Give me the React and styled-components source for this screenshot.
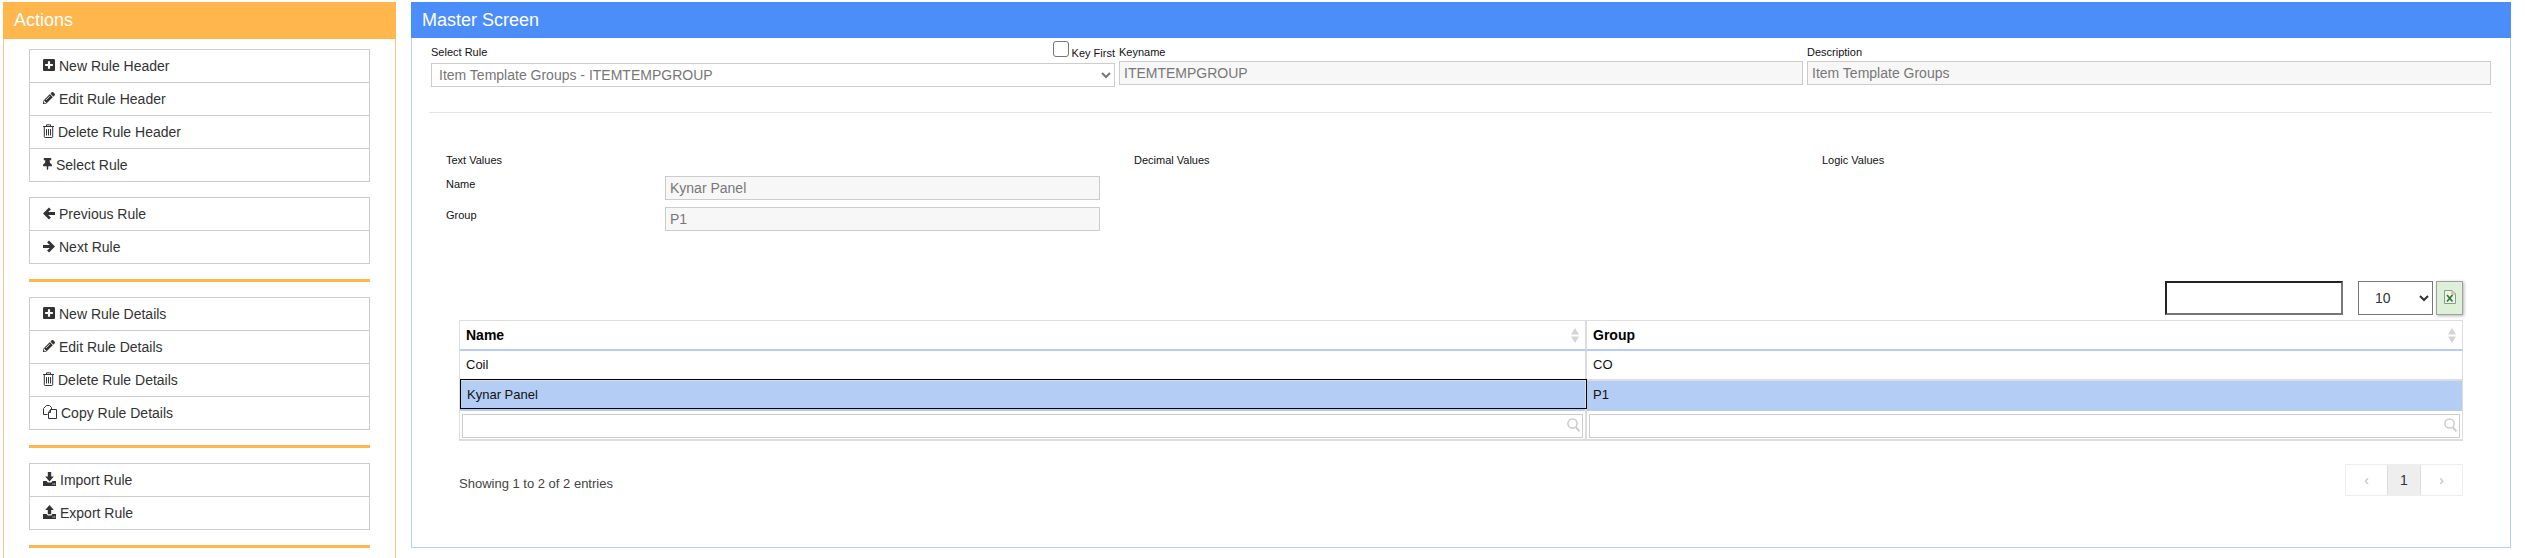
import React from "react";
import styled, { createGlobalStyle } from "styled-components";
import { FaPlusSquare, FaPencilAlt, FaThumbtack } from "react-icons/fa";

const Global = createGlobalStyle`
  html, body { margin: 0; padding: 0; background: #fff; overflow: hidden; height: 558px; }
  body { font-family: "Liberation Sans", Arial, sans-serif; color: #333; }
  * { box-sizing: border-box; }
`;

const Page = styled.div`
  display: flex; align-items: flex-start; gap: 15px;
  padding: 2px 14px 0 3px; width: 2525px; height: 558px; overflow: hidden;
`;
const ActionsPanel = styled.aside`
  flex: 0 0 393px; height: 600px; border: 1px solid #ffc888; border-top: 0; background: #fff;
`;
const MasterPanel = styled.main`
  flex: 1; height: 546px; border: 1px solid #b6cff5; border-top: 0; background: #fff;
`;
const Heading = styled.h2`
  margin: 0 -1px; font-size: 18px; line-height: 20px; font-weight: 400; color: #fff;
  height: ${p => p.$h}px; padding: ${p => p.$top}px 0 0 ${p => p.$left}px; background: ${p => p.$bg};
`;
const ActionsBody = styled.div`
  display: flex; flex-direction: column; gap: 15px; padding: 10px 25px 0 25px;
`;
const Group = styled.ul`
  list-style: none; margin: 0; padding: 0; display: flex; flex-direction: column;
`;
const Item = styled.li`
  display: flex; align-items: center; gap: 4px; height: 34px; padding-left: 13px;
  border: 1px solid #ccc; margin-top: -1px; font-size: 14px; color: #333;
  &:first-child { margin-top: 0; }
`;
const IconBox = styled.span`
  display: inline-flex; align-items: center; justify-content: center; flex: 0 0 ${p => p.$w}px;
  width: ${p => p.$w}px; height: 14px; color: #333; position: relative; top: -1px;
`;
const Rule = styled.hr`
  margin: 0; border: 0; height: 3px; background: #ffb64c;
`;
const FormGrid = styled.div`
  display: grid; grid-template-columns: 684px 684px 684px; column-gap: 4px;
  padding-left: 19px; align-items: start;
`;
const FieldCol = styled.div`display: flex; flex-direction: column;`;
const RuleHead = styled.div`
  display: flex; justify-content: space-between; height: 25px; padding-top: 3px;
`;
const Label = styled.label`
  display: block; font-size: 11px; line-height: 13px; color: #111; margin-top: ${p => p.$mt || 0}px;
`;
const StackLabel = styled(Label)`
  height: 15px; margin-top: 8px;
`;
const KeyFirst = styled.div`
  display: flex; align-items: flex-start; gap: 3px;
`;
const Check = styled.span`
  display: block; width: 16px; height: 16px; border: 1px solid #767676; border-radius: 3px; background: #fff;
`;
const Field = styled.div`
  height: 24px; border: 1px solid #ccc; background: #f7f7f7; color: #777;
  font-size: 14px; line-height: 22px; padding-left: 4px; width: 100%;
`;
const RuleSelect = styled.select`
  display: block; width: 100%; height: 24px; border: 1px solid #ccc; background: #fff; color: #777;
  font-family: inherit; font-size: 14px; padding: 0 0 1px 3px; border-radius: 0; outline: 0;
`;
const Divider = styled.hr`
  margin: 25px 18px 0 17px; border: 0; height: 1px; background: #e5e5e5;
`;
const ValuesGrid = styled.div`
  display: grid; grid-template-columns: 688px 688px 1fr; padding: 41px 0 0 34px;
`;
const ValueRows = styled.div`
  display: flex; flex-direction: column; gap: 7px; margin-top: 9px;
`;
const ValueRow = styled.div`
  display: grid; grid-template-columns: 219px 435px; align-items: start;
`;
const TableArea = styled.section`
  padding: 50px 47px 0 47px;
`;
const Toolbar = styled.div`
  display: flex; justify-content: flex-end; height: 34px; margin-bottom: 5px;
`;
const SearchBox = styled.input`
  width: 178px; height: 34px; background: #fff; padding: 0; margin-right: 15px; outline: 0;
  border-style: solid; border-width: 2px; border-color: #222 #767676 #767676 #222;
`;
const SizeSelect = styled.select`
  width: 75px; height: 34px; border: 1px solid #767676; background: #fff; color: #333; font-family: inherit;
  font-size: 14px; padding-left: 12px; margin-right: 3px; border-radius: 0; outline: 0;
`;
const ExcelButton = styled.button`
  width: 27px; height: 34px; padding: 0 0 3px; display: flex; align-items: center; justify-content: center;
  background: #dff0d8; border: 1px solid #a0a0a0; box-shadow: 1px 1px 3px rgba(0,0,0,.3);
`;
const Table = styled.table`
  width: 2004px; border-collapse: separate; border-spacing: 0; table-layout: fixed;
  border: 1px solid #ddd; border-bottom-width: 2px;
`;
const HeadCell = styled.th`
  height: 30px; padding: 0 6px; text-align: left; font-size: 14px; color: #000;
  border-bottom: 2px solid #b3cdf5;
  &:first-child { border-right: 2px solid #ddd; }
`;
const HeadInner = styled.div`display: flex; align-items: center; justify-content: space-between;`;
const BodyCell = styled.td`
  position: relative; height: 30px; padding: 0 6px; font-size: 13px; color: #111;
  border-bottom: ${p => p.$selected ? "0" : "2px solid #ddd"};
  background: ${p => p.$selected ? "#b3cdf5" : "#fff"};
  &:first-child { border-right: 2px solid #ddd; }
`;
const FocusBox = styled.span`
  position: absolute; inset: -2px -2px 2px 0; border: 1px solid #000; pointer-events: none;
`;
const CellText = styled.span`
  position: relative; top: ${p => p.$selected ? -2 : -1}px; left: ${p => p.$shift || 0}px;
`;
const FilterCell = styled.td`
  position: relative; height: 28px; padding: 2px 2px 1px 2px;
  &:first-child { border-right: 2px solid #ddd; }
`;
const FilterInput = styled.input`
  display: block; width: 100%; height: 24px; border: 1px solid #ccc; background: #fff; padding: 0; outline: 0;
`;
const FilterIcon = styled.svg`
  position: absolute; top: 7px; right: 5px; width: 13px; height: 14px;
`;
const Footer = styled.div`
  display: flex; justify-content: space-between; align-items: flex-start; margin-top: 23px;
`;
const Info = styled.div`
  font-size: 13px; line-height: 18px; color: #444; padding-top: 11px;
`;
const Pager = styled.div`display: flex; height: 32px; border: 1px solid #eee;`;
const PageCell = styled.div`
  width: ${p => p.$w}px; display: flex; align-items: center; justify-content: center; font-size: 14px;
  color: ${p => p.$active ? "#333" : "#bbb"};
  background: ${p => p.$active ? "#eee" : "#fff"};
  border-left: ${p => p.$active ? "1px solid #ddd" : "0"};
  border-right: ${p => p.$active ? "1px solid #ddd" : "0"};
`;

const stroke = { fill: "none", stroke: "currentColor", strokeWidth: 1 };
const Trash = () => (
  <svg width="11" height="14" viewBox="0 0 11 14" {...stroke}>
    <path d="M0 2.5h11M3.5 2.5V.8h4v1.7M1.3 2.5v10.2c0 .4.3.8.8.8h6.8c.5 0 .8-.4.8-.8V2.5" />
    <path d="M3.5 5v6.5M5.5 5v6.5M7.5 5v6.5" />
  </svg>
);
const Copy = () => (
  <svg width="14" height="14" viewBox="0 0 14 14" {...stroke}>
    <path d="M3.5 .5h3l2 2V4M3.5 .5L.5 3.5V9.5h4" />
    <path d="M7.5 4.5h6v9h-8V7.5z" />
    <path d="M7.5 4.5v3h-2" />
  </svg>
);
const Tray = () => <path d="M0 9h3.6l1.2 1.4h3.4L9.4 9H13v5H0zM9.5 11.6h1v1h-1zM11.2 11.6h1v1h-1z" fillRule="evenodd" />;
const ImportIc = () => (
  <svg width="13" height="14" viewBox="0 0 13 14" fill="currentColor">
    <path d="M4.8 0h3.4v4.4h2.6L6.5 9.4 2.2 4.4h2.6z" /><Tray />
  </svg>
);
const ExportIc = () => (
  <svg width="13" height="14" viewBox="0 0 13 14" fill="currentColor">
    <path d="M6.5 0l4.3 5H8.2v4.3H4.8V5H2.2z" /><Tray />
  </svg>
);
const LeftArrow = () => (
  <svg width="12" height="13" viewBox="0 0 12 13" fill="currentColor">
    <path d="M6 .5L0 6.5l6 6 1.9-1.9L5.2 8H12V5H5.2l2.7-2.6z" />
  </svg>
);
const RightArrow = () => (
  <svg width="12" height="13" viewBox="0 0 12 13" fill="currentColor">
    <path d="M6 .5l6 6-6 6-1.9-1.9L6.8 8H0V5h6.8L4.1 2.4z" />
  </svg>
);
const I = ({ w, children }) => <IconBox $w={w}>{children}</IconBox>;
const plus = <I w={12}><FaPlusSquare size={14} /></I>;
const pencil = <I w={12}><FaPencilAlt size={12} /></I>;
const trash = <I w={11}><Trash /></I>;
const groups = [
  [[plus, "New Rule Header"], [pencil, "Edit Rule Header"], [trash, "Delete Rule Header"], [<I w={9}><FaThumbtack size={14} /></I>, "Select Rule"]],
  [[<I w={12}><LeftArrow /></I>, "Previous Rule"], [<I w={12}><RightArrow /></I>, "Next Rule"]],
  "rule",
  [[plus, "New Rule Details"], [pencil, "Edit Rule Details"], [trash, "Delete Rule Details"], [<I w={14}><Copy /></I>, "Copy Rule Details"]],
  "rule",
  [[<I w={13}><ImportIc /></I>, "Import Rule"], [<I w={13}><ExportIc /></I>, "Export Rule"]],
  "rule",
];

const SortIcon = () => (
  <svg width="8" height="15" viewBox="0 0 8 15" fill="#d4d4d4"><path d="M4 0l4 6.5H0zM0 8.5h8L4 15z" /></svg>
);
const SearchIc = () => (
  <FilterIcon viewBox="0 0 13 14" fill="none" stroke="#ccc" strokeWidth="1.5">
    <circle cx="5.5" cy="5.5" r="4.6" /><path d="M9 9.3l3.4 4" strokeWidth="2" />
  </FilterIcon>
);
const ExcelIc = () => (
  <svg width="12" height="14" viewBox="0 0 12 14">
    <path d="M.5 .5h7.5l3.5 3.5v9.5H.5z" fill="#f2f5e6" stroke="#7d9f96" />
    <path d="M8 .5v3.5h3.5" fill="none" stroke="#b9a877" />
    <path d="M3 5l5.5 6.5M8.5 5L3 11.5" fill="none" stroke="#2e7d32" strokeWidth="1.8" />
  </svg>
);

export default function App() {
  return (
    <>
      <Global />
      <Page>
        <ActionsPanel>
          <Heading $bg="#ffb64c" $h={37} $top={8} $left={11}>Actions</Heading>
          <ActionsBody>
            {groups.map((g, i) => g === "rule" ? <Rule key={i} /> : (
              <Group key={i}>
                {g.map(([ic, t]) => <Item key={t}>{ic}{t}</Item>)}
              </Group>
            ))}
          </ActionsBody>
        </ActionsPanel>
        <MasterPanel>
          <Heading $bg="#4b8efa" $h={36} $top={8} $left={11}>Master Screen</Heading>
          <FormGrid>
            <FieldCol>
              <RuleHead>
                <Label $mt={5}>Select Rule</Label>
                <KeyFirst><Check /><Label $mt={6}>Key First</Label></KeyFirst>
              </RuleHead>
              <RuleSelect defaultValue="i"><option value="i">Item Template Groups - ITEMTEMPGROUP</option></RuleSelect>
            </FieldCol>
            <FieldCol>
              <StackLabel>Keyname</StackLabel>
              <Field>ITEMTEMPGROUP</Field>
            </FieldCol>
            <FieldCol>
              <StackLabel>Description</StackLabel>
              <Field>Item Template Groups</Field>
            </FieldCol>
          </FormGrid>
          <Divider />
          <ValuesGrid>
            <div>
              <Label>Text Values</Label>
              <ValueRows>
                <ValueRow><Label $mt={2}>Name</Label><Field>Kynar Panel</Field></ValueRow>
                <ValueRow><Label $mt={2}>Group</Label><Field>P1</Field></ValueRow>
              </ValueRows>
            </div>
            <Label>Decimal Values</Label>
            <Label>Logic Values</Label>
          </ValuesGrid>
          <TableArea>
            <Toolbar>
              <SearchBox />
              <SizeSelect defaultValue="10"><option>10</option><option>25</option></SizeSelect>
              <ExcelButton><ExcelIc /></ExcelButton>
            </Toolbar>
            <Table>
              <colgroup><col style={{ width: 1127 }} /><col /></colgroup>
              <thead>
                <tr>
                  <HeadCell><HeadInner>Name<SortIcon /></HeadInner></HeadCell>
                  <HeadCell><HeadInner>Group<SortIcon /></HeadInner></HeadCell>
                </tr>
              </thead>
              <tbody>
                <tr><BodyCell><CellText>Coil</CellText></BodyCell><BodyCell><CellText>CO</CellText></BodyCell></tr>
                <tr>
                  <BodyCell $selected><FocusBox /><CellText $selected $shift={1}>Kynar Panel</CellText></BodyCell>
                  <BodyCell $selected><CellText $selected>P1</CellText></BodyCell>
                </tr>
                <tr>
                  <FilterCell><FilterInput /><SearchIc /></FilterCell>
                  <FilterCell><FilterInput /><SearchIc /></FilterCell>
                </tr>
              </tbody>
            </Table>
            <Footer>
              <Info>Showing 1 to 2 of 2 entries</Info>
              <Pager>
                <PageCell $w={41}>‹</PageCell>
                <PageCell $w={34} $active>1</PageCell>
                <PageCell $w={41}>›</PageCell>
              </Pager>
            </Footer>
          </TableArea>
        </MasterPanel>
      </Page>
    </>
  );
}
